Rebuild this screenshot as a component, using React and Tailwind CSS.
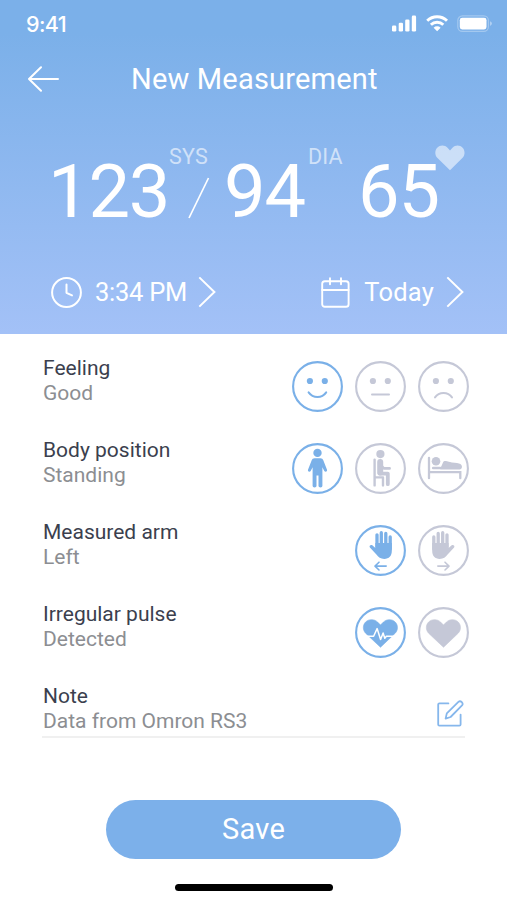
import React from 'react';
import clsx from 'clsx';

const HEART_PATH =
  'M25.5 40.3 L10.6 26.2 C7.6 23.2 7.6 18 10.6 15 C14 11.8 19.4 11.9 22.6 15.1 L25.5 18 L28.4 15.1 C31.6 11.9 37 11.8 40.2 15 C43.2 18 43.2 23.2 40.2 26.2 Z';

const Smile = () => (
  <>
    <circle cx="17.9" cy="20" r="3.1" fill="currentColor" />
    <circle cx="32.8" cy="20" r="3.1" fill="currentColor" />
    <path d="M16.6 31.4 C21 37.6 30 37.6 34.2 31.4" fill="none" stroke="currentColor" strokeWidth="2" strokeLinecap="round" />
  </>
);

const Neutral = () => (
  <>
    <circle cx="17.9" cy="20" r="3.1" fill="currentColor" />
    <circle cx="32.8" cy="20" r="3.1" fill="currentColor" />
    <path d="M17 33.6 H34" fill="none" stroke="currentColor" strokeWidth="2" strokeLinecap="round" />
  </>
);

const Sad = () => (
  <>
    <circle cx="17.9" cy="20" r="3.1" fill="currentColor" />
    <circle cx="32.8" cy="20" r="3.1" fill="currentColor" />
    <path d="M17 36.4 C21 30.6 30 30.6 34 36.4" fill="none" stroke="currentColor" strokeWidth="2" strokeLinecap="round" />
  </>
);

const Standing = () => (
  <g fill="currentColor">
    <circle cx="25.5" cy="9.9" r="4.2" />
    <path d="M22.6 15.3 H28.4 C30 15.3 30.8 16 31.3 17.3 L35 26.8 C35.6 28.6 33.2 29.6 32.3 28 L30.4 24.2 V43 Q30.4 44.4 28.6 44.4 Q26.5 44.4 26.5 43 V32.6 H24.5 V43 Q24.5 44.4 22.5 44.4 Q20.6 44.4 20.6 43 V24.2 L18.7 28 C17.8 29.6 15.4 28.6 16 26.8 L19.7 17.3 C20.2 16 21 15.3 22.6 15.3 Z" />
  </g>
);

const Sitting = () => (
  <g fill="none" stroke="currentColor" strokeLinecap="round" strokeLinejoin="round">
    <circle cx="25.4" cy="11.1" r="4.1" fill="currentColor" stroke="none" />
    <path d="M19.6 16.6 V42.4 M19.6 34.4 H28 V42.4" strokeWidth="2.4" />
    <path d="M25.2 19 V29.6" strokeWidth="6" />
    <path d="M26 22.4 L28.8 25.4 H34.6" strokeWidth="2.7" />
    <path d="M24.6 30.6 H32.8 V41.2" strokeWidth="3.8" />
  </g>
);

const Lying = () => (
  <g fill="currentColor">
    <path d="M11 15 V35.2 M11 29.2 H42.3 V35.2" fill="none" stroke="currentColor" strokeWidth="2.3" strokeLinecap="round" />
    <circle cx="18" cy="18.2" r="4.3" />
    <path d="M15.2 25 H22.2" stroke="currentColor" strokeWidth="2.6" strokeLinecap="round" />
    <path d="M22.4 26.4 C22 25 23.2 24 23.7 22.6 L25 19.5 C25.5 18.3 26.6 17.9 28 18.1 L34 19.4 C37.6 19.8 41 20.1 42.4 21 C44.8 22.4 44.4 26.4 41.6 26.4 Z" />
  </g>
);

const Hand = () => (
  <>
    <g fill="none" stroke="currentColor" strokeWidth="3.3" strokeLinecap="round">
      <path d="M22 22 V9.8 M26.3 22 V7.7 M30.8 22 V8.5 M35.2 24 V12" />
    </g>
    <path
      d="M20.4 18 H36.8 V26 C36.8 31 34 33.9 29.3 33.9 C25.5 33.9 23.3 32.2 21.4 29.6 L14.9 22.4 C13.7 20.6 16 19.2 17.6 20.4 L20.4 23 Z"
      fill="currentColor"
    />
    <path d="M31.2 41.1 H20.4 M24 37.2 L20 41.1 L24 45" fill="none" stroke="currentColor" strokeWidth="1.6" strokeLinecap="round" strokeLinejoin="round" />
  </>
);

const HandMirrored = () => (
  <g transform="translate(51 0) scale(-1 1)">
    <Hand />
  </g>
);

const HeartPulse = () => (
  <>
    <path d={HEART_PATH} fill="currentColor" stroke="currentColor" strokeWidth=".6" strokeLinejoin="round" />
    <path
      d="M8 29.2 H18.6 L22.1 21.6 L25.6 32.4 L28.1 26 L29.8 31.2 L31.4 29.2 H43"
      fill="none"
      stroke="#fff"
      strokeWidth="1.5"
      strokeLinejoin="round"
    />
  </>
);

const Heart = () => (
  <path d={HEART_PATH} fill="currentColor" stroke="currentColor" strokeWidth=".6" strokeLinejoin="round" />
);

const rows = [
  { label: 'Feeling', value: 'Good', options: [Smile, Neutral, Sad] },
  { label: 'Body position', value: 'Standing', options: [Standing, Sitting, Lying] },
  { label: 'Measured arm', value: 'Left', options: [Hand, HandMirrored] },
  { label: 'Irregular pulse', value: 'Detected', options: [HeartPulse, Heart] },
];

const OptionButton = ({ icon: Icon, selected }) => (
  <button className={clsx('block size-[51px]', selected ? 'text-[#7ab0e8]' : 'text-[#c5c8d7]')}>
    <svg viewBox="0 0 51 51" className="size-full">
      <circle cx="25.5" cy="25.5" r="24.4" fill="none" stroke="currentColor" strokeWidth="2.1" />
      <Icon />
    </svg>
  </button>
);

const OptionRow = ({ label, value, options }) => (
  <div className="flex h-[82px] items-start justify-between">
    <Labels label={label} value={value} />
    <div className="flex gap-3 pt-[5px]">
      {options.map((icon, i) => (
        <OptionButton key={i} icon={icon} selected={i === 0} />
      ))}
    </div>
  </div>
);

const Labels = ({ label, value }) => (
  <div className="text-[21px] leading-[25px] whitespace-nowrap">
    <p className="text-[#3b3f4e]">{label}</p>
    <p className="text-[#8c8e92]">{value}</p>
  </div>
);

const StatusBar = () => (
  <div className="flex h-12 items-center justify-between pl-[26px] pr-[15px]">
    <span className="pt-px font-[Inter,sans-serif] text-[21.5px] font-medium tracking-[-0.6px]">9:41</span>
    <svg viewBox="0 0 100 18" className="h-[18px] w-[100px]" fill="#fff">
      <rect x="0" y="10.6" width="4.3" height="5.9" rx="1.3" />
      <rect x="6.7" y="7.8" width="4.3" height="8.7" rx="1.3" />
      <rect x="13.2" y="4.4" width="4.3" height="12.1" rx="1.3" />
      <rect x="19.8" y="0.6" width="4.3" height="15.9" rx="1.3" />
      <g fill="none" stroke="#fff" strokeWidth="2.9">
        <path d="M35.2 5.8 A14.2 14.2 0 0 1 55 5.8" />
        <path d="M38.9 9.7 A8.9 8.9 0 0 1 51.3 9.7" />
      </g>
      <path d="M45.1 16.2 L41.6 12.8 A5 5 0 0 1 48.6 12.8 Z" />
      <rect x="65.8" y="0.9" width="30.6" height="15.4" rx="4.6" fill="none" stroke="#fff" strokeOpacity=".3" strokeWidth="1.2" />
      <rect x="67.8" y="2.8" width="26.7" height="11.6" rx="2.4" />
      <path d="M98 6.2 Q100 7.2 100 8.6 Q100 10 98 11 Z" fillOpacity=".4" />
    </svg>
  </div>
);

const Chevron = () => (
  <svg viewBox="0 0 18 32" className="h-8 w-[18px]" fill="none" stroke="currentColor" strokeWidth="2">
    <path d="M1.3 1.4 L16.4 16 L1.3 30.6" />
  </svg>
);

const Readings = () => (
  <div className="flex h-[90px] items-start pl-[48px] text-[74px] leading-[102px] tracking-[-1.2px]">
    <span className="w-[121px]">123</span>
    <div className="flex w-[55px] flex-col">
      <span className="h-[30px] text-[21.5px] leading-[31px] tracking-[0.2px] text-white/60">SYS</span>
      <svg viewBox="0 0 22 42" className="ml-[19px] mt-[6px] h-[42px] w-[22px]" stroke="#fff" strokeWidth="1.7">
        <path d="M1 41 L20.5 1" />
      </svg>
    </div>
    <span className="w-[84px]">94</span>
    <span className="w-[50px] text-[21.5px] leading-[31px] tracking-[0.2px] text-white/60">DIA</span>
    <span className="w-[77px]">65</span>
    <svg viewBox="8 12 35 29" className="mt-[4px] h-[26px] w-[30px] text-white/55" preserveAspectRatio="none">
      <path d={HEART_PATH} fill="currentColor" />
    </svg>
  </div>
);

export default function App() {
  return (
    <div className="flex h-[900px] w-[507px] flex-col overflow-hidden bg-white font-[Roboto,sans-serif]">
      <header className="h-[334px] bg-linear-to-b from-[#7bb0e9] from-10% to-[#a3c1f7] text-white">
        <StatusBar />
        <div className="flex h-[62px] items-center pl-7">
          <svg viewBox="0 0 31 26" className="h-[26px] w-[31px]" fill="none" stroke="currentColor" strokeWidth="2" strokeLinecap="round" strokeLinejoin="round">
            <path d="M30 13 H1 M13 1.2 L1 13 L13 24.8" />
          </svg>
          <h1 className="ml-[72px] whitespace-nowrap pt-0.5 text-[29px] tracking-[0.2px]">New Measurement</h1>
        </div>
        <div className="pt-[31px]">
          <Readings />
        </div>
        <div className="mt-[45px] flex h-8 items-center justify-between pl-[51px] pr-[43px] text-[25.5px]">
          <button className="flex items-center whitespace-nowrap">
            <svg viewBox="0 0 31 31" className="size-[31px]" fill="none" stroke="currentColor" strokeWidth="2" strokeLinecap="round" strokeLinejoin="round">
              <circle cx="15.5" cy="15.5" r="14.4" />
              <path d="M15.5 7.4 V15.8 L21 18.4" />
            </svg>
            <span className="ml-[13px] mr-[11px] tracking-[-0.25px]">3:34 PM</span>
            <Chevron />
          </button>
          <button className="flex items-center whitespace-nowrap">
            <svg viewBox="0 0 29 31" className="h-[31px] w-[29px]" fill="none" stroke="currentColor" strokeWidth="1.9" strokeLinecap="round">
              <rect x="1.2" y="4.2" width="26.4" height="25.6" rx="2.6" />
              <path d="M1.2 13 H27.6 M9 1.2 V7.2 M20 1.2 V7.2" />
            </svg>
            <span className="ml-[14px] mr-3 tracking-[0.2px]">Today</span>
            <Chevron />
          </button>
        </div>
      </header>

      <main className="flex grow flex-col pt-[22px]">
        <div className="pl-[43px] pr-[38px]">
          {rows.map((row) => (
            <OptionRow key={row.label} {...row} />
          ))}
        </div>
        <div className="mx-[42px] flex h-[54px] items-start justify-between border-b-2 border-[#f0f0f0] pl-px">
          <Labels label="Note" value="Data from Omron RS3" />
          <svg viewBox="0 0 27 27" className="mr-px mt-4 size-[27px] text-[#86b7ec]" fill="none" stroke="currentColor" strokeWidth="1.8" strokeLinecap="round" strokeLinejoin="round">
            <path d="M11.4 3.4 H2.4 Q1.2 3.4 1.2 4.6 V24.4 Q1.2 25.6 2.4 25.6 H22.4 Q23.6 25.6 23.6 24.4 V14.6" />
            <path d="M8.6 18.6 L9.8 13.4 L21.4 1.9 Q23 0.6 24.7 2 Q26.4 3.8 25 5.4 L13.6 17 Z" />
          </svg>
        </div>
        <button className="mx-auto mt-[62px] h-[59px] w-[295px] rounded-full bg-[#7cb0ea] pt-px text-[29px] tracking-[0.3px] text-white">
          Save
        </button>
        <div className="mx-auto mt-[25px] h-[7px] w-[158px] rounded-full bg-black" />
      </main>
    </div>
  );
}
